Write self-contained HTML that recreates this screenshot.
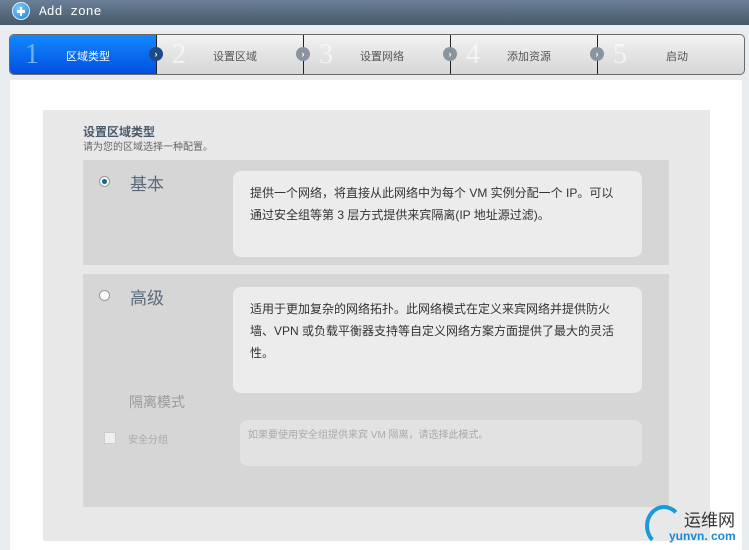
<!DOCTYPE html>
<html><head><meta charset="utf-8"><style>
*{margin:0;padding:0;box-sizing:border-box}
body{width:749px;height:550px;overflow:hidden;background:#e9ecef;font-family:"Liberation Sans","Noto Sans CJK SC",sans-serif;position:relative}
.hdr{position:absolute;left:0;top:0;width:749px;height:25px;background:linear-gradient(#6b8098,#465868);}
.hdr .t{position:absolute;left:39px;top:4px;font-family:"Liberation Mono",monospace;font-size:13px;color:#fff}
.plus{position:absolute;left:12px;top:2px;width:18px;height:18px;border-radius:50%;background:radial-gradient(circle at 40% 35%,#7fd0ff,#1a7fd0);border:1px solid #dfefff}
.plus:before{content:"";position:absolute;left:4px;top:7px;width:8px;height:2.5px;background:#fff}
.plus:after{content:"";position:absolute;left:6.8px;top:4px;width:2.5px;height:8.5px;background:#fff}
.steps{position:absolute;left:9px;top:34px;width:736px;height:41px;border:1px solid #6a6a6a;border-radius:5px;background:linear-gradient(#f2f2f2,#d6d6d6);overflow:hidden}
.st{position:absolute;top:0;height:39px;width:147px;border-right:1px solid #222}
.st .n{position:absolute;left:15px;top:4px;font-family:"Liberation Serif",serif;font-size:28px;color:#fff;opacity:.6}
.st .l{position:absolute;left:0;width:100%;text-align:center;top:13px;font-size:11px;color:#555;padding-left:10px}
.st.a{background:linear-gradient(#1588ff,#0050e0)}
.st.a .l{color:#fff}
.st.a .n{color:#6fb0ff;opacity:1}
.arr{position:absolute;top:12px;width:14px;height:14px;border-radius:50%;background:#8a949e;color:#fff;font-size:9px;text-align:center;line-height:14px;font-weight:bold;z-index:2}
.main{position:absolute;left:10px;top:80px;width:732px;height:470px;background:#fff}
.inner{position:absolute;left:43px;top:110px;width:667px;height:431px;background:#e8e8e8}
.opt{position:absolute;left:83px;width:586px;background:#d6d6d6}
.box{position:absolute;background:#ececec;border-radius:8px;font-size:12px;color:#333;line-height:22px;padding:11px 17px}
.h{position:absolute;left:83px;top:123px;font-size:12px;font-weight:bold;color:#4a5a6a}
.s{position:absolute;left:83px;top:138px;font-size:10px;color:#666}
.rad{position:absolute;width:11px;height:11px;border-radius:50%;border:1px solid #999;background:#fafafa}
</style></head><body>
<div class="hdr"><div class="plus"></div><div class="t">Add zone</div></div>
<div class="steps">
<div class="st a" style="left:0"><div class="n">1</div><div class="l">区域类型</div></div>
<div class="st" style="left:147px"><div class="n">2</div><div class="l">设置区域</div></div>
<div class="st" style="left:294px"><div class="n">3</div><div class="l">设置网络</div></div>
<div class="st" style="left:441px"><div class="n">4</div><div class="l">添加资源</div></div>
<div class="st" style="left:588px;border:none;width:148px"><div class="n">5</div><div class="l">启动</div></div>
<div class="arr" style="left:139px;background:#1f4a8a">›</div>
<div class="arr" style="left:286px">›</div>
<div class="arr" style="left:433px">›</div>
<div class="arr" style="left:580px">›</div>
</div>
<div class="main"></div>
<div class="inner"></div>
<div class="h">设置区域类型</div>
<div class="s">请为您的区域选择一种配置。</div>
<div class="opt" style="top:160px;height:105px"></div>
<div class="rad" style="left:99px;top:176px;background:radial-gradient(circle,#1c6a8a 35%,#fafafa 45%)"></div>
<div style="position:absolute;left:130px;top:170px;font-size:17px;color:#5a6a7a">基本</div>
<div class="box" style="left:233px;top:171px;width:409px;height:86px">提供一个网络，将直接从此网络中为每个 VM 实例分配一个 IP。可以通过安全组等第 3 层方式提供来宾隔离(IP 地址源过滤)。</div>
<div class="opt" style="top:274px;height:233px"></div>
<div class="rad" style="left:99px;top:290px"></div>
<div style="position:absolute;left:130px;top:284px;font-size:17px;color:#5a6a7a">高级</div>
<div class="box" style="left:233px;top:287px;width:409px;height:106px">适用于更加复杂的网络拓扑。此网络模式在定义来宾网络并提供防火墙、VPN 或负载平衡器支持等自定义网络方案方面提供了最大的灵活性。</div>
<div style="position:absolute;left:129px;top:392px;font-size:14px;color:#999">隔离模式</div>
<div style="position:absolute;left:104px;top:432px;width:12px;height:12px;border:1px solid #ccc;background:#eee"></div>
<div style="position:absolute;left:128px;top:431px;font-size:10px;color:#aaa">安全分组</div>
<div class="box" style="left:240px;top:420px;width:402px;height:46px;background:#e2e2e2;font-size:10px;color:#aaa;line-height:16px;padding:8px 8px">如果要使用安全组提供来宾 VM 隔离，请选择此模式。</div>
<div style="position:absolute;left:645px;top:505px;width:38px;height:42px;border:4px solid #1a9ad8;border-right-color:transparent;border-bottom-color:transparent;border-radius:50%"></div>
<div style="position:absolute;left:684px;top:506px;font-size:17px;color:#333">运维网</div>
<div style="position:absolute;left:669px;top:529px;font-size:12px;font-weight:bold;color:#1a8ad8">yunvn. com</div>
</body></html>
